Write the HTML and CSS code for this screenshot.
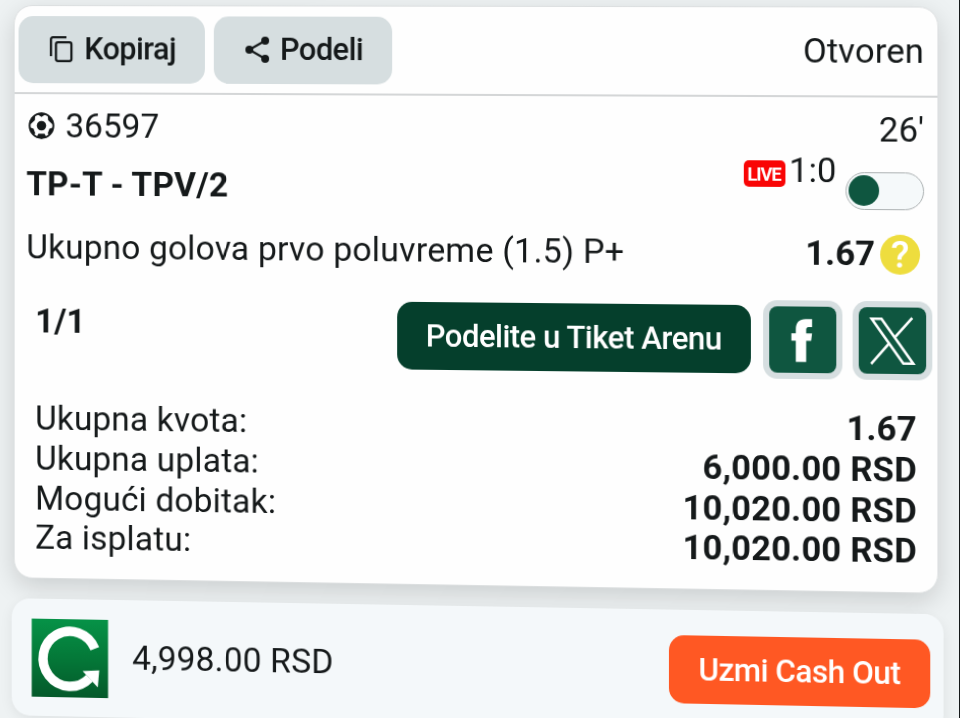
FILE: index.html
```html
<!DOCTYPE html>
<html lang="sr">
<head>
  <meta charset="UTF-8" />
  <title>Tiket</title>
  <meta name="viewport" content="width=device-width, initial-scale=1.0" />
  <link rel="stylesheet" href="styles.css">
</head>
<body>
  <div class="screen">
    <div class="ticket">
      <div class="ticket-header">
        <button class="btn btn-copy">
          <svg class="copy-icon" viewBox="0 0 24 26" fill="none" stroke="#15191a" stroke-width="2.3">
            <path d="M1.2 20V3.2Q1.2 1.2 3.2 1.2H17" />
            <rect x="6.3" y="6.2" width="15.8" height="18.6" rx="2" />
          </svg>
          <span>Kopiraj</span>
        </button>
        <button class="btn btn-share">
          <svg class="share-icon" viewBox="0 0 24 26" fill="#15191a">
            <path d="M20 4L4 13L20 22" fill="none" stroke="#15191a" stroke-width="2.2" />
            <circle cx="20" cy="4" r="4" />
            <circle cx="4" cy="13" r="4" />
            <circle cx="20" cy="22" r="4" />
          </svg>
          <span>Podeli</span>
        </button>
        <span class="status">Otvoren</span>
      </div>

      <div class="event">
        <div class="row code-row">
          <svg class="ball-icon" viewBox="0 0 26 26">
            <circle cx="13" cy="13" r="11.7" fill="none" stroke="#15191a" stroke-width="1.9" />
            <g fill="#15191a">
              <circle cx="13" cy="13" r="4.6" />
              <path d="M8.5 1.8L13 4.5L17.5 1.8L13 .5Z" />
              <path d="M1 9L3.6 5L6.8 3.2L6.5 7.8L2.3 11.6Z" />
              <path d="M25 9L22.4 5L19.2 3.2L19.5 7.8L23.7 11.6Z" />
              <path d="M1 14.5L5.2 16L7 20.8L4.5 21.5Z" />
              <path d="M25 14.5L20.8 16L19 20.8L21.5 21.5Z" />
              <path d="M10 20.8H16L17.8 24L13 25.6L8.2 24Z" />
            </g>
          </svg>
          <span class="code">36597</span>
          <span class="minute">26'</span>
        </div>
        <div class="row match-row">
          <span class="match">TP-T - TPV/2</span>
          <span class="live">LIVE</span>
          <span class="score">1:0</span>
          <span class="toggle"><span class="knob"></span></span>
        </div>
        <div class="row bet-row">
          <span class="bet">Ukupno golova prvo poluvreme (1.5) P+</span>
          <span class="odd">1.67</span>
          <span class="pending">?</span>
        </div>
      </div>

      <div class="share-row">
        <span class="count">1/1</span>
        <button class="btn btn-arena">Podelite u Tiket Arenu</button>
        <a class="social fb" href="#">
          <svg viewBox="0 0 67 67"><path fill="#fff" d="M26.5 56V34.5H22V27H26.5V23C26.5 16 30 12.5 36.5 12.5H43V20.5H39.5Q37 20.5 37 23.2V27H43L42 34.5H37V56Z" /></svg>
        </a>
        <a class="social tw" href="#">
          <svg viewBox="0 0 67 67"><g fill="none" stroke="#fff" stroke-width="2.6"><path d="M12.5 11.5H22.5L54.5 56.5H44.5Z" /><path d="M53.5 10.5L36.5 29.5M30.5 36L12 57" /></g></svg>
        </a>
      </div>

      <div class="totals">
        <div class="total"><span>Ukupna kvota:</span><b>1.67</b></div>
        <div class="total"><span>Ukupna uplata:</span><b>6,000.00 RSD</b></div>
        <div class="total"><span>Mogući dobitak:</span><b>10,020.00 RSD</b></div>
        <div class="total"><span>Za isplatu:</span><b>10,020.00 RSD</b></div>
      </div>
    </div>

    <div class="cashout">
      <svg class="cashout-logo" viewBox="0 0 78 78">
        <defs>
          <linearGradient id="green" x1="0" y1="0" x2="0" y2="1">
            <stop offset="0" stop-color="#069247" />
            <stop offset=".5" stop-color="#047838" />
            <stop offset="1" stop-color="#04592a" />
          </linearGradient>
        </defs>
        <rect width="78" height="78" fill="url(#green)" />
        <path d="M64.5 29A27.5 27.5 0 1 0 59 58.5" fill="none" stroke="#fff" stroke-width="9.5" />
        <path d="M52 51.5L69 50.5L67.5 67.5Z" fill="#fff" />
      </svg>
      <span class="amount">4,998.00 RSD</span>
      <button class="btn btn-cashout">Uzmi Cash Out</button>
    </div>
  </div>
  <div class="edge"></div>
</body>
</html>
```

FILE: styles.css
```css
* {
  box-sizing: border-box;
}
body {
  margin: 0;
  width: 960px;
  height: 718px;
  overflow: hidden;
  display: flex;
  background: #eef2f3;
  font-family: Roboto, "Liberation Sans", sans-serif;
  font-size: 34px;
  line-height: 40px;
  color: #15191a;
}
/* slightly tilted sheet */
.screen {
  flex: 0 0 960px;
  height: 718px;
  padding: 5px 21px 0 12px;
  transform-origin: 0 0;
  transform: matrix3d(0.9753, 0.0015, 0, -0.0000257, 0, 1, 0, 0, 0, 0, 1, 0, 0, 0, 0, 1);
}
.edge {
  position: absolute;
  top: 0;
  right: 0;
  width: 1px;
  height: 718px;
  background: #15191a;
}
.ticket {
  width: 925px;
  height: 573px;
  margin-left: 2px;
  background: #fefefe;
  border: 1px solid #dcdfe0;
  border-radius: 19px;
  box-shadow: 0 8px 26px rgba(0, 0, 0, 0.15);
}
.btn {
  display: flex;
  align-items: center;
  justify-content: center;
  height: 67px;
  padding: 0;
  border: none;
  border-radius: 15px;
  font-family: inherit;
  font-size: 31px;
  font-weight: 500;
  letter-spacing: -0.5px;
  white-space: nowrap;
  cursor: pointer;
}

/* header */
.ticket-header {
  display: flex;
  align-items: center;
  height: 88px;
  padding: 0 13px 0 4px;
  gap: 9px;
  border-bottom: 2px solid #d4d6d7;
}
.btn-copy,
.btn-share {
  padding: 0 0 1px 3px;
  background: #d6dee0;
  color: #15191a;
  gap: 11px;
}
.btn-copy {
  width: 190px;
}
.btn-share {
  width: 180px;
}
.copy-icon,
.share-icon {
  width: 24px;
  height: 26px;
}
.status {
  margin-left: auto;
  margin-top: -2px;
  letter-spacing: 0.1px;
}

/* event */
.event {
  padding: 11px 13px 0 12px;
}
.row {
  display: flex;
}
.code-row {
  height: 57px;
}
.ball-icon {
  width: 27px;
  height: 27px;
  margin: 7px 0 0 2px;
}
.code {
  margin-left: 11px;
}
.minute {
  margin-left: auto;
}
.match-row {
  height: 64px;
}
.match {
  font-weight: 700;
  margin-top: 1px;
  letter-spacing: 0.2px;
}
.live {
  width: 41px;
  height: 26px;
  margin: -6px 4px 0 auto;
  border-radius: 5px;
  background: #f90505;
  color: #fff;
  font-size: 18px;
  font-weight: 700;
  line-height: 27px;
  letter-spacing: -1px;
  text-align: center;
}
.score {
  margin-top: -17px;
}
.toggle {
  width: 77px;
  height: 37px;
  margin: 5px 0 0 9px;
  padding: 2px;
  border: 1px solid #aeb3b4;
  border-radius: 19px;
  background: #f5f9fa;
}
.knob {
  display: block;
  width: 30px;
  height: 30px;
  border-radius: 50%;
  background: #0f5640;
}
.bet-row {
  height: 62px;
}
.bet {
  letter-spacing: 0.21px;
}
.odd {
  margin-left: auto;
  font-weight: 700;
}
.pending {
  width: 39px;
  height: 39px;
  margin: 2px 4px 0 5px;
  border-radius: 50%;
  background: #eedd3e;
  color: #fff;
  font-size: 37px;
  font-weight: 500;
  line-height: 40px;
  text-align: center;
}

/* sharing */
.share-row {
  display: flex;
  height: 109px;
  padding: 0 5px 0 21px;
}
.count {
  margin-top: 12px;
  font-weight: 700;
}
.btn-arena {
  width: 352px;
  margin: 10px 12px 0 auto;
  background: #053f2c;
  color: #fff;
}
.social {
  width: 78px;
  height: 77px;
  margin-top: 5px;
  padding: 6px;
  border-radius: 14px;
  background: #d6dee0;
}
.social + .social {
  margin-left: 10px;
}
.social svg {
  display: block;
  width: 66px;
  height: 65px;
  border-radius: 8px;
  background: #0f5640;
}

/* totals */
.totals {
  padding: 0 20px 0 21px;
}
.total {
  display: flex;
  justify-content: space-between;
  height: 39.8px;
  letter-spacing: 0.18px;
}

/* cash out */
.cashout {
  display: flex;
  align-items: flex-start;
  position: relative;
  width: 932px;
  height: 117px;
  margin-top: 20px;
  padding: 20px 13px 0 20px;
  background: #f4f8fa;
  border-radius: 19px;
  box-shadow: 0 3px 14px rgba(0, 0, 0, 0.07);
}
.cashout-logo {
  width: 79px;
  height: 78px;
}
.amount {
  margin: 17px 0 0 24px;
  letter-spacing: 0.15px;
}
.btn-cashout {
  width: 257px;
  margin: 5px 0 0 auto;
  background: #ff5823;
  color: #fff;
}
```
